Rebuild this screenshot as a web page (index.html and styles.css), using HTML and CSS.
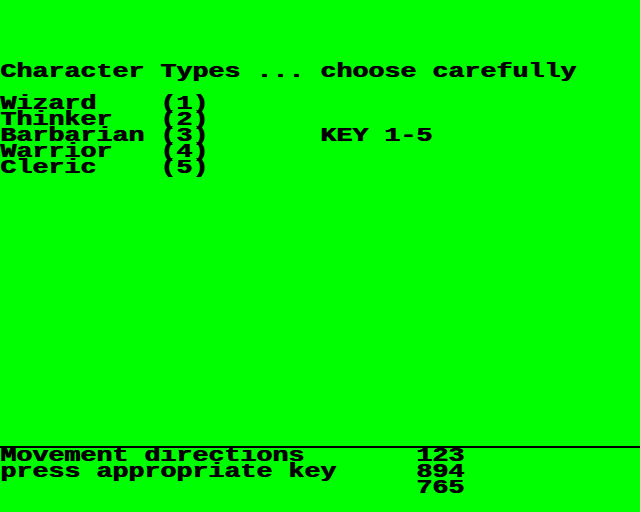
FILE: index.html
```html
<!DOCTYPE html>
<html>
<head>
<meta charset="utf-8">
<link rel="stylesheet" href="styles.css">
</head>
<body>
<div class="screen">
<pre class="text main">




Character Types ... choose carefully

Wizard    (1)
Thinker   (2)
Barbarian (3)       KEY 1-5
Warrior   (4)
Cleric    (5)</pre>
<div class="footer">
<pre class="text">Movement directions       123
press appropriate key     894
                          765</pre>
</div>
</div>
</body>
</html>
```
FILE: styles.css
```css
html, body {
  margin: 0;
  padding: 0;
  background: #00ff00;
}
.screen {
  width: 640px;
  height: 512px;
  background: #00ff00;
  display: flex;
  flex-direction: column;
  overflow: hidden;
}
.text {
  margin: 0;
  width: 504px;
  font-family: "Liberation Mono", "DejaVu Sans Mono", monospace;
  font-weight: bold;
  font-size: 21px;
  line-height: 16px;
  color: #000;
  white-space: pre;
  text-shadow: 0.8px 0 0 #000;
  transform: scaleX(1.26984);
  transform-origin: 0 0;
}
.main {
  flex: 1;
}
.footer {
  height: 64px;
  border-top: 2px solid #000;
}
```
